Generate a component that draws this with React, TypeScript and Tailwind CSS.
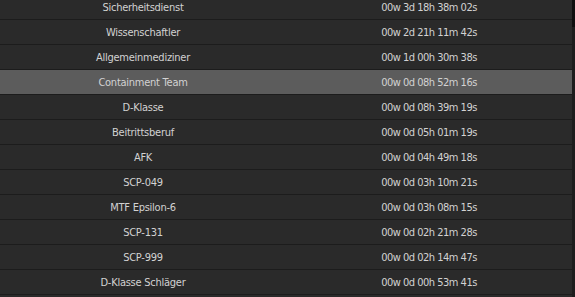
import React from "react";

const rows: [string, string][] = [
  ["Sicherheitsdienst", "00w 3d 18h 38m 02s"],
  ["Wissenschaftler", "00w 2d 21h 11m 42s"],
  ["Allgemeinmediziner", "00w 1d 00h 30m 38s"],
  ["Containment Team", "00w 0d 08h 52m 16s"],
  ["D-Klasse", "00w 0d 08h 39m 19s"],
  ["Beitrittsberuf", "00w 0d 05h 01m 19s"],
  ["AFK", "00w 0d 04h 49m 18s"],
  ["SCP-049", "00w 0d 03h 10m 21s"],
  ["MTF Epsilon-6", "00w 0d 03h 08m 15s"],
  ["SCP-131", "00w 0d 02h 21m 28s"],
  ["SCP-999", "00w 0d 02h 14m 47s"],
  ["D-Klasse Schläger", "00w 0d 00h 53m 41s"],
  ["", ""],
];

export default function App() {
  return (
    <div className="flex h-[297px] w-[575px] overflow-hidden bg-[#2a2a2a] text-[11px] text-[#d2d2d2] [font-family:'DejaVu_Sans_Condensed','DejaVu_Sans',sans-serif]">
      <div className="flex-1 overflow-hidden">
        <div className="-mt-[5px] flex flex-col">
          {rows.map(([job, time], i) => (
            <div
              key={i}
              className={
                "grid h-[25px] grid-cols-2 items-center border-b border-[#1c1c1c] " +
                (i === 3 ? "bg-[#5c5c5c]" : "bg-[#2a2a2a]")
              }
            >
              <span className="text-center leading-none tracking-[-0.25px]">{job}</span>
              <span className="text-center leading-none tracking-[-0.5px]">{time}</span>
            </div>
          ))}
        </div>
      </div>
      <div className="flex w-[3px] flex-col bg-[#1d1d1d]">
        <div className="h-[27px] bg-[#0f0f0f]" />
      </div>
    </div>
  );
}
